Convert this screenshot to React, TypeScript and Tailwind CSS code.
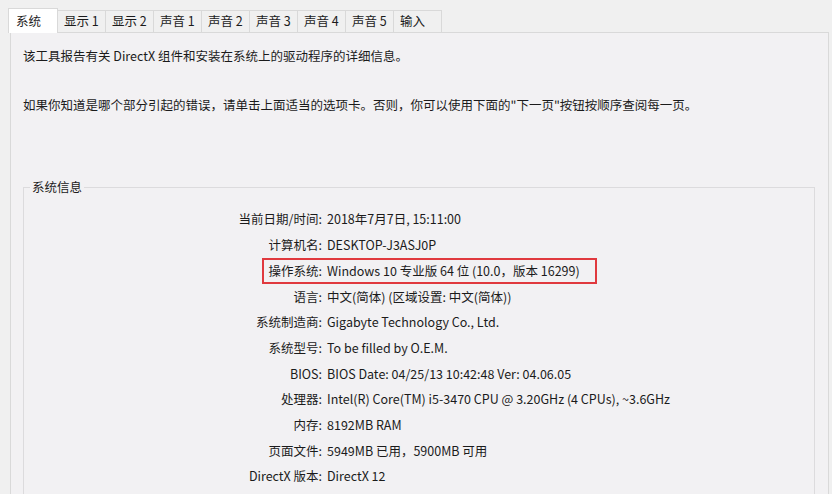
import React from "react";

const tabs = ["显示 1", "显示 2", "声音 1", "声音 2", "声音 3", "声音 4", "声音 5", "输入"];

const rows: [string, string, boolean?][] = [
  ["当前日期/时间:", "2018年7月7日, 15:11:00"],
  ["计算机名:", "DESKTOP-J3ASJ0P"],
  ["操作系统:", "Windows 10 专业版 64 位 (10.0，版本 16299)", true],
  ["语言:", "中文(简体) (区域设置: 中文(简体))"],
  ["系统制造商:", "Gigabyte Technology Co., Ltd."],
  ["系统型号:", "To be filled by O.E.M."],
  ["BIOS:", "BIOS Date: 04/25/13 10:42:48 Ver: 04.06.05"],
  ["处理器:", "Intel(R) Core(TM) i5-3470 CPU @ 3.20GHz (4 CPUs), ~3.6GHz"],
  ["内存:", "8192MB RAM"],
  ["页面文件:", "5949MB 已用，5900MB 可用"],
  ["DirectX 版本:", "DirectX 12"],
];

export default function App() {
  return (
    <div
      className="w-[832px] h-[494px] overflow-hidden bg-[#f0f0f0] text-[#1b1b1b] text-[12.5px]"
      style={{ fontFamily: '"Noto Sans CJK SC", "Noto Sans", sans-serif' }}
    >
      <div className="flex items-end pl-[8px] pt-[7px] h-[32px]">
        <div className="relative z-10 w-[50px] h-[25px] bg-white border border-b-0 border-[#d9d9d9] flex items-center pl-[7px] -mb-[1px]">
          系统
        </div>
        {tabs.map((t) => (
          <div
            key={t}
            className="h-[22px] w-[48px] border border-l-0 border-b-0 border-[#d9d9d9] bg-[#f0f0f0] flex items-center pl-[6px]"
          >
            {t}
          </div>
        ))}
      </div>
      <div className="ml-[10px] w-[819px] h-[470px] border border-[#d9d9d9] bg-[#f2f1f3] pl-[12px] pr-[13px]">
        <div className="pt-[14px] h-[24px] leading-[18px]">该工具报告有关 DirectX 组件和安装在系统上的驱动程序的详细信息。</div>
        <div className="mt-[39px] leading-[18px]">如果你知道是哪个部分引起的错误，请单击上面适当的选项卡。否则，你可以使用下面的"下一页"按钮按顺序查阅每一页。</div>
        <div className="relative mt-[73px] border border-[#dcdbdd] h-[400px]">
          <div className="absolute -top-[10px] left-[6px] px-[2px] bg-[#f2f1f3] leading-[18px]">系统信息</div>
          <div className="pt-[19px]">
            {rows.map(([k, v, hl]) => (
              <div key={k} className="relative flex items-center h-[25.7px]">
                <div className="w-[298px] text-right">{k}</div>
                <div className="ml-[5px] whitespace-nowrap">{v}</div>
                {hl && (
                  <div className="absolute left-[238px] w-[335px] top-0 h-[26px] border-2 border-[#e0393e]" />
                )}
              </div>
            ))}
          </div>
        </div>
      </div>
    </div>
  );
}
